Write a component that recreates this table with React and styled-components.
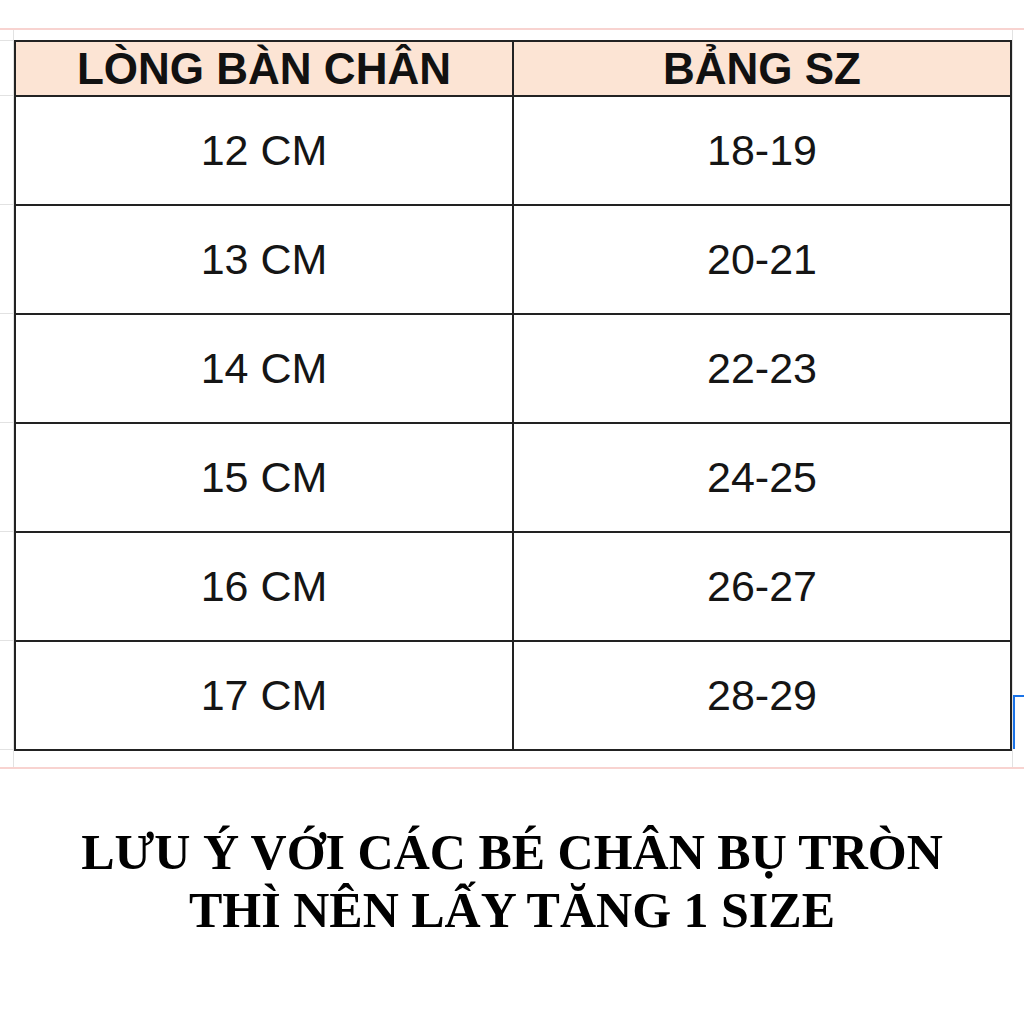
import React from "react";
import styled, { createGlobalStyle } from "styled-components";

const rows = [
  ["12 CM", "18-19"],
  ["13 CM", "20-21"],
  ["14 CM", "22-23"],
  ["15 CM", "24-25"],
  ["16 CM", "26-27"],
  ["17 CM", "28-29"],
];

const GlobalStyle = createGlobalStyle`
  html, body {
    margin: 0;
    background: #fff;
  }
  body {
    font-family: "Liberation Sans", Arial, sans-serif;
  }
`;

const Page = styled.div`
  width: 1024px;
  height: 1024px;
  overflow: hidden;
  padding-top: 28px;
  box-sizing: border-box;
`;

const Sheet = styled.div`
  display: flex;
  border-top: 2px solid #f8d3d0;
  border-bottom: 2px solid #f8d3d0;
  padding: 10px 0 16px;
`;

const Gutter = styled.div`
  width: ${(p) => p.$width}px;
  display: flex;
  flex-direction: column;
  margin-top: -10px;
  margin-bottom: -16px;
  ${(p) => (p.$side === "left" ? "border-right: 1px solid #e2e2e2;" : "border-left: 1px solid #e2e2e2;")}
`;

const GutterCell = styled.div`
  height: ${(p) => p.$h}px;
  box-sizing: border-box;
  border-bottom: 1px solid #e2e2e2;
  flex-shrink: 0;
`;

const Selected = styled.div`
  height: 54px;
  margin-top: ${(p) => p.$top}px;
  border-top: 2px solid #1a73e8;
  border-left: 2px solid #1a73e8;
  box-sizing: border-box;
`;

const Table = styled.table`
  width: 1000px;
  border-collapse: collapse;
  border: 2px solid #222;
  table-layout: fixed;
`;

const HeadCell = styled.th`
  height: 53px;
  padding: 0;
  background: #fce4d4;
  border: 2px solid #222;
  font-family: "Liberation Sans", Arial, sans-serif;
  font-weight: bold;
  font-size: 44px;
  color: #111;
  text-align: center;
  line-height: 1;
`;

const Cell = styled.td`
  height: 107px;
  padding: 0;
  border: 2px solid #222;
  font-family: "Liberation Sans", Arial, sans-serif;
  font-size: 43px;
  color: #151515;
  text-align: center;
  line-height: 1;
`;

const Note = styled.div`
  margin-top: 54px;
  font-family: "Liberation Serif", "Times New Roman", serif;
  font-weight: bold;
  font-size: 50px;
  line-height: 58px;
  color: #000;
  text-align: center;
`;

export default function App() {
  return (
    <Page>
      <GlobalStyle />
      <Sheet>
        <Gutter $side="left" $width={13}>
          <GutterCell $h={11} />
          <GutterCell $h={55} />
          {rows.map((r) => (
            <GutterCell key={r[0]} $h={109} />
          ))}
        </Gutter>
        <Table>
          <thead>
            <tr>
              <HeadCell>LÒNG BÀN CHÂN</HeadCell>
              <HeadCell>BẢNG SZ</HeadCell>
            </tr>
          </thead>
          <tbody>
            {rows.map(([foot, size]) => (
              <tr key={foot}>
                <Cell>{foot}</Cell>
                <Cell>{size}</Cell>
              </tr>
            ))}
          </tbody>
        </Table>
        <Gutter $side="right" $width={11}>
          <Selected $top={665} />
        </Gutter>
      </Sheet>
      <Note>
        LƯU Ý VỚI CÁC BÉ CHÂN BỤ TRÒN
        <br />
        THÌ NÊN LẤY TĂNG 1 SIZE
      </Note>
    </Page>
  );
}
